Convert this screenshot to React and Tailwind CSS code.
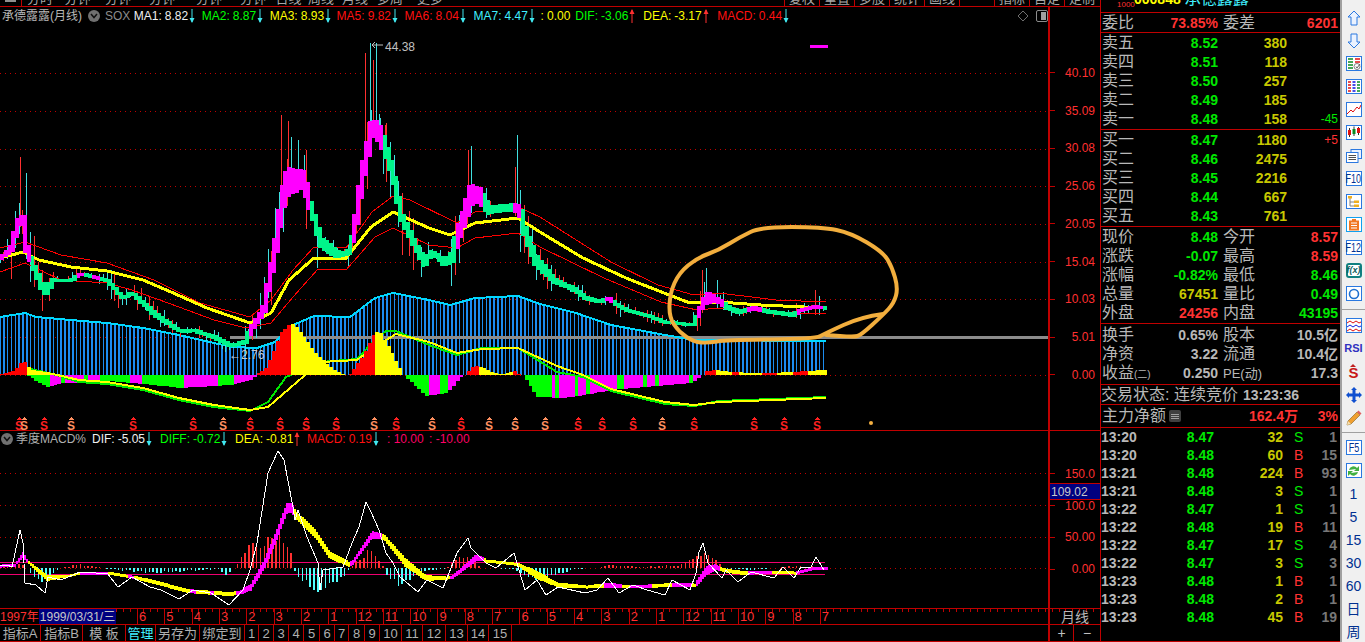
import React from 'react';

const LINE = 'border-[#c00000]';

// piecewise linear lookup, points sorted by x
const at = (pts, x) => {
  if (x <= pts[0][0]) return pts[0][1];
  for (let i = 1; i < pts.length; i++) {
    if (x <= pts[i][0]) {
      const [x0, y0] = pts[i - 1];
      const [x1, y1] = pts[i];
      return y0 + ((y1 - y0) * (x - x0)) / (x1 - x0);
    }
  }
  return pts[pts.length - 1][1];
};
const inRange = (ranges, x) => ranges.some(([a, b]) => x >= a && x < b);
const rnd = (i) => {
  const v = Math.sin(i * 12.9898) * 43758.5453;
  return v - Math.floor(v);
};
const line = (pts) => pts.map((p) => p.join(',')).join(' ');
const smooth = (pts) => {
  let d = `M${pts[0][0]} ${pts[0][1]}`;
  for (let i = 1; i < pts.length - 1; i++) {
    const mx = (pts[i][0] + pts[i + 1][0]) / 2;
    const my = (pts[i][1] + pts[i + 1][1]) / 2;
    d += ` Q${pts[i][0]} ${pts[i][1]} ${mx} ${my}`;
  }
  const last = pts[pts.length - 1];
  return `${d} L${last[0]} ${last[1]}`;
};

const STEP = 3.83;
const BARS = Array.from({ length: 216 }, (_, i) => i * STEP);

const volumeTop = [[0,317],[25,313],[36,317],[71,320],[107,323],[143,328],[179,335],[214,343],[232,347],[257,348],[275,342],[293,325],[314,316],[350,317],[375,298],[393,293],[429,300],[450,305],[475,298],[518,296],[540,304],[576,313],[611,325],[665,335],[694,340],[826,341]];
const price = [[0,258],[11,250],[16,232],[22,212],[27,250],[45,293],[54,280],[71,280],[82,274],[107,280],[123,298],[132,293],[154,313],[171,325],[182,332],[193,330],[214,337],[232,346],[246,342],[250,330],[264,310],[275,250],[282,200],[286,187],[289,180],[296,182],[302,178],[307,190],[311,207],[321,243],[339,255],[348,253],[354,233],[357,213],[362,177],[368,147],[371,130],[375,128],[380,134],[386,150],[393,173],[398,197],[400,213],[414,243],[425,263],[432,252],[445,263],[452,257],[457,237],[464,217],[471,195],[480,195],[489,210],[514,207],[520,210],[525,233],[536,260],[554,280],[576,290],[586,298],[601,302],[608,298],[615,303],[626,310],[647,315],[665,322],[694,325],[697,317],[701,307],[706,297],[719,300],[726,307],[740,312],[754,308],[772,312],[794,315],[801,310],[815,307],[826,308]];
// body height along the price path
const bodyHeight = [[0,3],[15,8],[25,8],[30,6],[45,8],[55,3],[130,3],[150,5],[180,3],[246,4],[270,10],[285,28],[303,18],[310,6],[325,12],[345,4],[360,15],[375,18],[385,12],[395,8],[420,8],[432,4],[445,8],[470,22],[490,8],[515,8],[530,12],[560,5],[600,3],[700,3],[706,14],[716,5],[826,3]];
const priceMagenta = [[0,27],[76,82],[90,96],[246,307],[350,382],[452,482],[512,520],[604,610],[696,722],[745,760],[796,822]];
const yellowMa = [[0,258],[23,252],[39,260],[71,267],[107,271],[143,280],[171,292],[207,308],[250,323],[271,313],[289,280],[314,258],[346,258],[371,227],[393,212],[429,228],[450,235],[475,223],[518,218],[540,232],[583,258],[626,278],[669,295],[690,303],[719,302],[761,305],[826,308]];
const redUpper = [[0,248],[25,242],[61,255],[107,263],[154,280],[200,303],[250,317],[271,300],[293,270],[314,247],[346,248],[372,212],[393,196],[410,200],[457,223],[475,212],[518,207],[540,217],[611,262],[658,285],[694,295],[719,293],[776,300],[826,302]];
const redLower = [[0,272],[25,263],[61,280],[107,283],[132,290],[179,307],[214,320],[246,328],[271,323],[293,297],[318,269],[346,270],[375,237],[393,228],[429,245],[457,248],[475,238],[518,233],[540,247],[604,278],[661,302],[697,310],[719,308],[769,312],[826,314]];
const spikes = [[20,157,'#ff3030'],[26,173,'#40e0e0'],[281,115,'#ff3030'],[288,121,'#ff3030'],[291,137,'#40e0e0'],[298,140,'#40e0e0'],[304,155,'#40e0e0'],[365,53,'#ff3030'],[370,43,'#40e0e0'],[373,60,'#ff3030'],[376,43,'#40e0e0'],[380,118,'#40e0e0'],[385,125,'#ff3030'],[468,150,'#ff3030'],[471,146,'#40e0e0'],[515,167,'#ff3030'],[517,135,'#40e0e0'],[702,270,'#ff3030'],[706,268,'#40e0e0'],[717,280,'#40e0e0'],[815,290,'#ff3030'],[819,296,'#40e0e0']];

const positive = [[0,374],[14,370],[21,360],[25,365],[29,370],[53,374],[56,375],[254,375],[265,368],[279,333],[289,323],[296,328],[314,353],[330,368],[343,375],[348,375],[362,355],[373,332],[379,333],[388,348],[402,375],[464,375],[473,365],[480,367],[490,372],[500,374],[514,371],[518,375],[701,375],[705,371],[716,370],[730,372],[750,373],[770,373],[790,372],[805,371],[826,370]];
const positiveYellow = [[24,56],[290,295],[297,345],[374,377],[379,402],[475,512],[716,730],[738,760],[775,790],[808,812],[815,827]];
const negative = [[25,375],[45,387],[52,385],[64,383],[107,381],[143,384],[179,388],[229,385],[250,380],[254,375],[402,375],[425,396],[446,393],[461,375],[521,375],[536,397],[560,398],[576,396],[611,390],[654,386],[690,383],[701,375]];
const negativeGreen = [[25,46],[59,64],[82,88],[96,127],[139,182],[218,230],[403,427],[439,446],[521,534],[536,551],[554,558],[574,577],[583,586],[614,622],[643,645],[654,657],[686,690]];
const macdYellow = [[26,370],[53,374],[79,380],[107,382],[143,388],[179,398],[214,405],[250,410],[268,407],[304,376],[321,362],[357,360],[375,347],[396,334],[429,342],[457,353],[482,349],[518,348],[557,366],[583,375],[611,389],[665,402],[694,405],[719,402],[826,398]];
const macdGreen = [[26,368],[53,374],[79,382],[107,384],[143,390],[179,400],[214,407],[250,411],[268,402],[286,377],[321,362],[357,359],[375,340],[386,331],[396,331],[429,345],[457,355],[482,348],[518,348],[557,372],[583,377],[611,391],[665,404],[694,406],[719,401],[826,397]];
const signals = [[19,'r'],[24,'o'],[44,'r'],[71,'o'],[133,'r'],[193,'r'],[223,'o'],[250,'r'],[280,'r'],[306,'r'],[336,'r'],[374,'o'],[396,'r'],[432,'o'],[461,'r'],[489,'o'],[515,'o'],[545,'o'],[578,'r'],[602,'r'],[633,'r'],[662,'o'],[694,'r'],[754,'r'],[784,'r'],[817,'r']];
const loop = [[883,314],[861,317],[826,333],[815,339],[726,340],[708,343],[694,342],[679,332],[669,317],[670,293],[679,273],[697,258],[719,250],[740,237],[761,227],[822,227],[851,233],[883,252],[892,267],[898,288],[894,303],[883,315],[861,335],[854,337],[826,335]];

const difLine = [[0,565],[7,565],[12,567],[20,530],[23,543],[25,583],[36,585],[45,593],[48,577],[61,580],[80,572],[96,573],[107,573],[118,587],[132,577],[150,587],[161,590],[179,599],[193,590],[211,593],[229,605],[243,590],[250,570],[257,543],[268,473],[278,451],[284,460],[293,507],[295,520],[298,510],[307,537],[318,563],[320,590],[323,570],[343,567],[352,543],[359,527],[366,502],[371,512],[379,530],[386,553],[393,563],[400,577],[418,592],[427,580],[443,588],[457,553],[468,538],[471,548],[486,563],[496,568],[514,553],[525,590],[537,580],[546,595],[558,587],[585,593],[597,590],[608,578],[619,593],[633,585],[647,590],[665,595],[672,580],[690,590],[696,573],[699,552],[703,543],[708,563],[722,578],[726,570],[738,582],[751,572],[774,578],[783,567],[794,578],[801,567],[811,567],[816,557],[824,570]];
// x, centre y, thickness
const signalBand = [[0,566,3],[14,565,3],[22,555,6],[27,562,3],[46,578,6],[68,576,2],[80,573,3],[107,573,3],[132,577,3],[154,582,4],[186,591,4],[229,594,4],[238,593,4],[250,587,7],[264,563,10],[275,537,11],[286,508,11],[291,508,10],[295,515,8],[314,533,9],[329,555,8],[348,564,5],[352,562,5],[371,535,8],[379,536,6],[384,538,6],[404,562,9],[425,578,6],[446,578,3],[452,577,4],[475,558,7],[482,559,4],[486,561,3],[514,564,3],[518,565,4],[536,575,8],[557,585,5],[586,587,3],[608,585,5],[629,587,3],[672,585,4],[694,585,3],[697,582,7],[706,570,9],[715,567,6],[722,570,4],[742,573,4],[772,572,3],[794,573,3],[815,568,3],[826,568,3]];
const bandMagenta = [[0,27],[80,107],[127,133],[189,195],[210,214],[236,293],[350,382],[450,484],[604,622],[629,651],[672,692],[696,720],[747,772],[796,827]];
const histogram = [[0,1],[10,2],[20,4],[26,1],[30,-6],[40,-14],[50,-8],[60,0],[68,1],[78,4],[90,2],[110,-1],[150,-5],[185,-3],[220,-1],[225,-8],[232,-2],[236,3],[250,22],[265,25],[275,34],[281,36],[291,15],[294,0],[297,-8],[310,-18],[320,-24],[335,-14],[345,-7],[352,2],[362,12],[370,18],[380,8],[384,0],[386,-8],[400,-17],[420,-6],[430,-2],[445,-1],[452,4],[461,14],[476,4],[482,0],[515,-1],[520,-6],[536,-11],[560,-6],[575,-1],[600,0],[608,3],[640,1],[680,3],[696,12],[706,16],[718,6],[725,-1],[755,-2],[775,0],[790,2],[826,1]];

const signalFill = (k) => (k === 'r' ? '#ff2020' : '#ff9060');

function MainChart() {
  return (
    <svg className="block w-[1048px] flex-1" viewBox="0 25 1048 405" shapeRendering="crispEdges">
      {[73, 111, 149, 186, 224, 262, 299, 337, 375].map((y) => (
        <line key={y} x1="0" x2="1048" y1={y} y2={y} stroke="#c00000" strokeDasharray="1 4" />
      ))}
      {BARS.map((x) => (
        <line key={x} x1={x} x2={x} y1={at(volumeTop, x)} y2="375" stroke="#1c8cf0" strokeWidth="1.6" />
      ))}
      <rect x="230" y="336" width="818" height="3" fill="#8c8c8c" />
      <polyline points={line(volumeTop)} fill="none" stroke="#00d8ff" strokeWidth="2" />
      {BARS.map((x, i) => {
        const slope = Math.abs(at(price, x + 4) - at(price, x - 4));
        const amp = 3 + Math.min(slope * 1.6, 38);
        const y = at(price, x);
        const color = rnd(i) > 0.5 ? '#ff3030' : '#40e0e0';
        return <line key={x} x1={x} x2={x} y1={y - amp * rnd(i + 300)} y2={y + amp * rnd(i + 600)} stroke={color} />;
      })}
      {spikes.map(([x, top, color]) => (
        <line key={x} x1={x} x2={x} y1={top} y2={at(price, x) + 8} stroke={color} />
      ))}
      <polyline points={line(redUpper)} fill="none" stroke="#ff0000" />
      <polyline points={line(redLower)} fill="none" stroke="#ff0000" />
      <polyline points={line(yellowMa)} fill="none" stroke="#ffff00" strokeWidth="3" />
      {BARS.map((x) => {
        const a = at(price, x);
        const b = at(price, x + STEP);
        const extra = at(bodyHeight, x) / 2;
        return (
          <rect key={x} x={x} width={STEP} y={Math.min(a, b) - extra} height={Math.abs(a - b) + extra * 2} fill={inRange(priceMagenta, x) ? '#ff00ff' : '#00f58a'} />
        );
      })}
      {BARS.map((x) => {
        const y = at(negative, x);
        if (y <= 375 || x > 702) return null;
        return <rect key={x} x={x} width={STEP} y="375" height={y - 375} fill={inRange(negativeGreen, x) ? '#00ff00' : '#ff00ff'} />;
      })}
      <polyline points={line(macdGreen)} fill="none" stroke="#00e800" strokeWidth="2" />
      <polyline points={line(macdYellow)} fill="none" stroke="#ffff00" strokeWidth="2" />
      {BARS.map((x) => {
        const y = at(positive, x);
        if (y >= 375) return null;
        return <rect key={x} x={x} width={STEP} y={y} height={375 - y} fill={inRange(positiveYellow, x) ? '#ffff00' : '#ff0000'} />;
      })}
      {signals.map(([x, k]) => (
        <g key={x}>
          <polygon points={`${x},417 ${x - 3},420 ${x + 3},420`} fill={signalFill(k)} />
          <text x={x} y="429.5" textAnchor="middle" fontSize="12" fontWeight="700" fill={signalFill(k)} shapeRendering="auto">S</text>
        </g>
      ))}
      <rect x="810" y="45" width="18" height="3" fill="#ff00ff" />
      <circle cx="871" cy="423" r="2" fill="#f5b041" shapeRendering="auto" />
      <g shapeRendering="auto">
        <text x="385" y="51" fontSize="12" fill="#c0c0c0">44.38</text>
        <path d="M383 45 L372 45 L375 42 M372 45 L375 48" fill="none" stroke="#c0c0c0" />
        <text x="229" y="359" fontSize="12" fill="#c8c8c8">←2.76</text>
        <path d={smooth(loop)} fill="none" stroke="#f2ae3d" strokeWidth="4" strokeLinecap="round" strokeLinejoin="round" />
      </g>
    </svg>
  );
}

function SubChart() {
  return (
    <svg className="block w-[1048px] flex-1" viewBox="0 447 1048 161" shapeRendering="crispEdges">
      {[473, 505, 537, 568].map((y) => (
        <line key={y} x1="0" x2="1048" y1={y} y2={y} stroke="#c00000" strokeDasharray="1 4" />
      ))}
      <line x1="0" x2="825" y1="562" y2="562" stroke="#f00070" />
      <line x1="0" x2="825" y1="574" y2="574" stroke="#f00070" />
      {BARS.map((x, i) => {
        const v = at(histogram, x) * (0.75 + rnd(i + 90) * 0.4);
        if (Math.abs(v) < 0.5) return null;
        return <line key={x} x1={x} x2={x} y1="568" y2={568 - v} stroke={v > 0 ? '#ff3030' : '#50ffff'} strokeWidth="1.5" />;
      })}
      {Array.from({ length: 414 }, (_, i) => i * 2).map((x) => {
        const pts = signalBand.map((p) => [p[0], p[1]]);
        const th = at(signalBand.map((p) => [p[0], p[2]]), x);
        return <rect key={x} x={x} width="2" y={at(pts, x) - th / 2} height={th} fill={inRange(bandMagenta, x) ? '#ff00ff' : '#ffff00'} />;
      })}
      <polyline points={line(difLine)} fill="none" stroke="#ffffff" />
    </svg>
  );
}

function Arrow({ up, color }) {
  return (
    <svg className="mx-[1px] shrink-0" width="6" height="14" viewBox="0 0 6 14">
      {up ? (
        <>
          <line x1="3" x2="3" y1="1" y2="14" stroke={color} />
          <polygon points="3,0 0.5,5 5.5,5" fill={color} />
        </>
      ) : (
        <>
          <line x1="3" x2="3" y1="0" y2="13" stroke={color} />
          <polygon points="3,14 0.5,9 5.5,9" fill={color} />
        </>
      )}
    </svg>
  );
}

const CYAN = '#40e8f0';
const RED_UP = '#ff3030';

function Chevron() {
  return (
    <span className="flex h-[12px] w-[12px] items-center justify-center rounded-full bg-[#707070]">
      <svg width="8" height="6" viewBox="0 0 8 6">
        <path d="M1 1 L4 4.5 L7 1" fill="none" stroke="#101010" strokeWidth="1.5" />
      </svg>
    </span>
  );
}

function Legend({ width, className, name, value, arrow }) {
  return (
    <div className={`flex items-center whitespace-nowrap ${width} ${className}`}>
      <span>{name}</span>
      <span className="ml-[3px]">{value}</span>
      {arrow === 'down' && <Arrow color={CYAN} />}
      {arrow === 'up' && <Arrow up color={RED_UP} />}
    </div>
  );
}

function MainLegend() {
  return (
    <div className="flex h-[18px] shrink-0 items-center text-[12px] leading-none">
      <span className="ml-[2px] w-[86px] whitespace-nowrap text-[#b8b8b8]">承德露露(月线)</span>
      <Chevron />
      <span className="ml-[5px] w-[29px] text-[#8c8c8c]">SOX</span>
      <Legend width="w-[68px]" className="text-[#f0f0f0]" name="MA1:" value="8.82" arrow="down" />
      <Legend width="w-[68px]" className="text-[#00ff00]" name="MA2:" value="8.87" arrow="down" />
      <Legend width="w-[67px]" className="text-[#ffff00]" name="MA3:" value="8.93" arrow="down" />
      <Legend width="w-[68px]" className="text-[#ff1010]" name="MA5:" value="9.82" arrow="down" />
      <Legend width="w-[69px]" className="text-[#ff1010]" name="MA6:" value="8.04" arrow="down" />
      <Legend width="w-[67px]" className="text-[#40f0ff]" name="MA7:" value="4.47" arrow="down" />
      <span className="w-[35px] text-[#ffff00]">: 0.00</span>
      <Legend width="w-[68px]" className="text-[#00ff00]" name="DIF:" value="-3.06" arrow="up" />
      <Legend width="w-[74px]" className="text-[#ffff00]" name="DEA:" value="-3.17" arrow="up" />
      <Legend width="w-[80px]" className="text-[#ff1010]" name="MACD:" value="0.44" arrow="down" />
      <svg className="ml-[220px]" width="12" height="12" viewBox="0 0 12 12">
        <polygon points="6,1 11,6 6,11 1,6" fill="none" stroke="#707070" />
      </svg>
      <span className="ml-[7px] flex h-[12px] w-[12px] rounded-[2px] border border-[#8c8c8c] p-[1px]">
        <span className="ml-auto h-full w-[5px] bg-[#a0a0a0]" />
      </span>
    </div>
  );
}

function SubLegend() {
  return (
    <div className="flex h-[16px] shrink-0 items-center text-[12px] leading-none">
      <span className="ml-[1px]"><Chevron /></span>
      <span className="ml-[3px] w-[76px] whitespace-nowrap text-[#b0b0b0]">季度MACD%</span>
      <Legend width="w-[68px]" className="text-[#f0f0f0]" name="DIF:" value="-5.05" arrow="down" />
      <Legend width="w-[75px]" className="text-[#00ff00]" name="DIFF:" value="-0.72" arrow="down" />
      <Legend width="w-[72px]" className="text-[#ffff00]" name="DEA:" value="-0.81" arrow="up" />
      <Legend width="w-[80px]" className="text-[#ff1010]" name="MACD:" value="0.19" arrow="down" />
      <span className="w-[42px] text-[#ff0066]">: 10.00</span>
      <span className="text-[#ff0066]">: -10.00</span>
    </div>
  );
}

function AxisRow({ label, height }) {
  return (
    <div className={`flex items-center ${height}`}>
      <span className="h-px w-[5px] bg-[#c00000]" />
      <span className="ml-auto pr-[5px] text-[12px] leading-none text-[#ff3030]">{label}</span>
    </div>
  );
}

const TOP_TABS = [
  ['分时', 'w-[36px]'], ['分钟', 'w-[39px]'], ['分钟', 'w-[42px]'], ['分钟', 'w-[46px]'], ['分钟', 'w-[48px]'], ['分钟', 'w-[40px]'], ['日线', 'w-[31px]'], ['周线', 'w-[34px]'], ['月线', 'w-[34px] text-[#40f0ff]'], ['多周', 'w-[36px]'], ['更多', 'w-[44px]'],
];
const RIGHT_TABS = ['复权', '重置', '多股', '统计', '画线', '', '指标', '自定', '定制'];

function TopStrip() {
  return (
    <div className={`flex h-[7px] shrink-0 overflow-hidden border-b ${LINE}`}>
      <div className="flex h-[6px] w-[22px] shrink-0 border-r border-[#c00000]">
        <span className="ml-[5px] h-[2px] w-[11px] bg-[#909090]" />
      </div>
      {TOP_TABS.map(([label, cls], i) => (
        <span key={i} className={`flex h-[5px] shrink-0 items-end justify-center text-[13px] leading-none text-[#a8a8a8] ${cls}`}>
          {label}
        </span>
      ))}
      <div className="ml-[332px] flex">
        {RIGHT_TABS.map((label, i) => (
          <span key={i} className="flex h-[6px] w-[35px] shrink-0 items-end justify-center border-l border-[#c00000] pb-[1px] text-[13px] leading-none text-[#a8a8a8]">
            {label}
          </span>
        ))}
      </div>
    </div>
  );
}

const MONTHS = [6, 5, 4, 3, 2, 3, 2, 1, 12, 11, 10, 9, 8, 7, 6, 5, 4, 3, 2, 1, 12, 11, 10, 9, 8, 7];

function TimeAxis() {
  return (
    <div className={`flex h-[16px] shrink-0 border-b ${LINE} bg-[repeating-linear-gradient(90deg,#c00000_0_1px,transparent_1px_6.83px)] bg-[length:100%_3px] bg-no-repeat`}>
      <div className="flex w-[1048px] items-stretch text-[13px] leading-none text-[#ff3030]">
        <span className="flex w-[39px] shrink-0 items-center whitespace-nowrap bg-black text-[12px]">1997年</span>
        <span className="flex w-[77px] shrink-0 items-center justify-center whitespace-nowrap border border-[#000080] bg-[#000080] text-[12px] text-[#c8c8c8]">1999/03/31/三</span>
        <span className="w-[21px] shrink-0" />
        {MONTHS.map((m, i) => (
          <span key={i} className="flex w-[27.32px] shrink-0 items-center border-l border-[#c00000] pl-[1px] text-[#ff3030]">{m}</span>
        ))}
      </div>
      <span className={`flex flex-1 items-center justify-center border-l-2 ${LINE} text-[14px] leading-none text-[#b8b8b8]`}>月线</span>
    </div>
  );
}

const TOOL_TABS = [
  ['指标A', 'w-[41px]'], ['指标B', 'w-[42px]'], ['模 板', 'w-[43px]'], ['管理', 'w-[30px] text-[#40f0ff]'], ['另存为', 'w-[44px]'], ['绑定到', 'w-[45px]'],
  ['1', 'w-[14px]'], ['2', 'w-[15px]'], ['3', 'w-[15px]'], ['4', 'w-[15px]'], ['5', 'w-[16px]'], ['6', 'w-[15px]'], ['7', 'w-[14px]'], ['8', 'w-[16px]'], ['9', 'w-[15px]'], ['10', 'w-[22px]'], ['11', 'w-[21px]'], ['12', 'w-[23px]'], ['13', 'w-[22px]'], ['14', 'w-[21px]'], ['15', 'w-[23px]'],
];

function BottomBar() {
  return (
    <div className={`flex h-[17px] shrink-0 border-b ${LINE}`}>
      <div className="flex w-[1048px] text-[13px] leading-none text-[#b0b0b0]">
        {TOOL_TABS.map(([label, cls]) => (
          <span key={label} className={`flex shrink-0 items-center justify-center whitespace-nowrap border-r border-[#c00000] ${cls}`}>{label}</span>
        ))}
      </div>
      <div className={`flex flex-1 border-l-2 ${LINE} text-[14px] leading-none text-[#c0c0c0]`}>
        <span className="flex w-[24px] items-center justify-center border-r border-[#c00000]">+</span>
        <span className="flex flex-1 items-center justify-center">−</span>
      </div>
    </div>
  );
}

function ChartColumn() {
  return (
    <div className="flex w-[1100px] shrink-0 flex-col">
      <TopStrip />
      <div className={`flex h-[424px] shrink-0 border-b ${LINE}`}>
        <div className="flex w-[1048px] flex-col"><MainLegend /><MainChart /></div>
        <div className={`flex-1 border-l-2 ${LINE} pt-[47px]`}>
          {['40.10', '35.09', '30.08', '25.06', '20.05', '15.04', '10.03', '5.01', '0.00'].map((l) => (
            <AxisRow key={l} label={l} height="h-[37.75px]" />
          ))}
        </div>
      </div>
      <div className={`flex h-[178px] shrink-0 border-b ${LINE}`}>
        <div className="flex w-[1048px] flex-col"><SubLegend /><SubChart /></div>
        <div className={`relative flex-1 border-l-2 ${LINE} pt-[27px]`}>
          {['150.0', '100.0', '50.00', '0.00'].map((l) => (
            <AxisRow key={l} label={l} height="h-[31.8px]" />
          ))}
          <span className={`absolute left-0 top-[52px] flex h-[17px] w-full items-center border-y ${LINE} bg-[#000080] pl-[1px] text-[12px] leading-none text-[#c8c8c8]`}>109.02</span>
        </div>
      </div>
      <TimeAxis />
      <BottomBar />
    </div>
  );
}

const GREEN = 'text-[#00e800]';
const RED = 'text-[#ff3232]';
const OLIVE = 'text-[#c8c800]';
const GREY = 'text-[#b8b8b8]';

const SELL = [['卖五','8.52','380'],['卖四','8.51','118'],['卖三','8.50','257'],['卖二','8.49','185'],['卖一','8.48','158','-45',GREEN]];
const BUY = [['买一','8.47','1180','+5',RED],['买二','8.46','2475'],['买三','8.45','2216'],['买四','8.44','667'],['买五','8.43','761']];
const STATS = [
  ['现价','8.48',GREEN,'今开','8.57',RED],
  ['涨跌','-0.07',GREEN,'最高','8.59',RED],
  ['涨幅','-0.82%',GREEN,'最低','8.46',GREEN],
  ['总量','67451',OLIVE,'量比','0.49',GREEN],
  ['外盘','24256',RED,'内盘','43195',GREEN],
];
const FUNDS = [
  ['换手','0.65%','股本','10.5亿'],
  ['净资','3.22','流通','10.4亿'],
  [<>收益<span className="text-[10px]">(二)</span></>,'0.250',<span className="text-[13px]">PE(动)</span>,'17.3'],
];
const TICKS = [
  ['13:20','8.47','32','S','1'],['13:20','8.48','60','B','15'],['13:21','8.48','224','B','93'],['13:21','8.48','3','S','1'],['13:22','8.47','1','S','1'],['13:22','8.48','19','B','11'],['13:22','8.47','17','S','4'],['13:22','8.47','3','S','3'],['13:23','8.48','1','B','1'],['13:23','8.48','2','B','1'],['13:23','8.48','45','B','19'],
];

function Label({ children }) {
  return <span className="whitespace-nowrap text-[16px] leading-none text-[#b8b8b8]">{children}</span>;
}

function Num({ children, className = '' }) {
  return <span className={`whitespace-nowrap text-right text-[14px] font-bold leading-none ${className}`}>{children}</span>;
}

function Depth({ rows }) {
  return (
    <div className={`h-[97px] shrink-0 border-b ${LINE}`}>
      {rows.map(([label, p, v, delta, color]) => (
        <div key={label} className="grid h-[19px] grid-cols-[116px_69px_51px] items-center pl-[1px]">
          <div className="flex items-center justify-between">
            <Label>{label}</Label>
            <Num className={GREEN}>{p}</Num>
          </div>
          <Num className={OLIVE}>{v}</Num>
          {delta ? <span className={`text-right text-[12px] leading-none ${color}`}>{delta}</span> : <span />}
        </div>
      ))}
    </div>
  );
}

function Half({ label, value, color, className }) {
  return (
    <div className={`flex items-center justify-between ${className}`}>
      <Label>{label}</Label>
      <Num className={color}>{value}</Num>
    </div>
  );
}

function QuotePanel() {
  return (
    <div className={`flex w-[240px] shrink-0 flex-col border-l ${LINE}`}>
      <div className={`flex h-[13px] shrink-0 items-end overflow-hidden border-b ${LINE} pl-[16px] leading-none`}>
        <span className="w-[17px] shrink-0 -translate-y-[3px] text-[8px] text-[#ff3030]">1000</span>
        <span className="mr-[4px] -translate-y-[6px] text-[14px] font-bold text-[#ffff00]">000848</span>
        <span className="-translate-y-[5px] text-[16px] text-[#40f0ff]">承德露露</span>
      </div>
      <div className={`flex h-[20px] shrink-0 items-center border-b ${LINE} pl-[1px]`}>
        <Half label="委比" value="73.85%" color={RED} className="w-[116px]" />
        <Half label="委差" value="6201" color={RED} className="ml-[5px] w-[115px]" />
      </div>
      <Depth rows={SELL} />
      <Depth rows={BUY} />
      <div className={`h-[97px] shrink-0 border-b ${LINE}`}>
        {STATS.map(([a, b, c, d, e, f]) => (
          <div key={a} className="flex h-[19px] items-center pl-[1px]">
            <Half label={a} value={b} color={c} className="w-[116px]" />
            <Half label={d} value={e} color={f} className="ml-[5px] w-[115px]" />
          </div>
        ))}
      </div>
      <div className={`h-[61px] shrink-0 border-b ${LINE} pt-[1px]`}>
        {FUNDS.map(([a, b, c, d]) => (
          <div key={b} className="flex h-[19px] items-center pl-[1px]">
            <Half label={a} value={b} color={GREY} className="w-[116px]" />
            <Half label={c} value={d} color={GREY} className="ml-[5px] w-[115px]" />
          </div>
        ))}
      </div>
      <div className={`flex h-[20px] shrink-0 items-center border-b ${LINE}`}>
        <Label>交易状态: 连续竞价</Label>
        <Num className={`ml-[5px] ${GREY}`}>13:23:36</Num>
      </div>
      <div className={`flex h-[23px] shrink-0 items-center border-b ${LINE} pl-[1px]`}>
        <Label>主力净额</Label>
        <span className="ml-[3px] flex h-[12px] w-[12px] flex-col justify-center gap-[1px] rounded-[2px] bg-[#404040] px-[2px]">
          <span className="h-px bg-[#a0a0a0]" />
          <span className="h-px bg-[#a0a0a0]" />
          <span className="h-px bg-[#a0a0a0]" />
        </span>
        <Num className={`ml-[68px] ${RED}`}>162.4万</Num>
        <Num className={`ml-auto pr-[2px] ${RED}`}>3%</Num>
      </div>
      <div className={`flex-1 border-b ${LINE}`}>
        {TICKS.map(([t, p, v, side, n], i) => (
          <div key={i} className="grid h-[18px] grid-cols-[113px_69px_36px_18px] items-center">
            <div className="flex items-center justify-between">
              <Num className={GREY}>{t}</Num>
              <Num className={GREEN}>{p}</Num>
            </div>
            <Num className={OLIVE}>{v}</Num>
            <span className={`pl-[11px] text-[14px] leading-none ${side === 'S' ? GREEN : RED}`}>{side}</span>
            <Num className="text-[#787878]">{n}</Num>
          </div>
        ))}
      </div>
    </div>
  );
}

function Box({ children, className = 'border-[#2a78e0]' }) {
  return <span className={`flex h-[15px] w-[16px] items-center justify-center border bg-white ${className}`}>{children}</span>;
}

function BoxText({ children }) {
  return <span className="inline-block scale-x-[0.75] text-[12px] leading-none text-[#003090]">{children}</span>;
}

const SvgIcon = ({ children }) => <svg width="16" height="16" viewBox="0 0 16 16">{children}</svg>;

const TOOLS = [
  <SvgIcon><path d="M8 1 L14 7 H11 V15 H5 V7 H2 Z" fill="#eaf2ff" stroke="#2a78e0" /></SvgIcon>,
  <SvgIcon><path d="M8 15 L14 9 H11 V1 H5 V9 H2 Z" fill="#eaf2ff" stroke="#2a78e0" /></SvgIcon>,
  <Box><svg width="14" height="13" viewBox="0 0 14 13"><path d="M1 2H6M1 5H6M1 8H6M1 11H6" stroke="#0a8a20" strokeWidth="1.4" /><path d="M8 2H13M8 5H13" stroke="#e01010" strokeWidth="1.4" /><circle cx="10" cy="9.5" r="3" fill="none" stroke="#808080" /><path d="M9 9.5 L10 11 L13 7" fill="none" stroke="#606060" /></svg></Box>,
  <Box><svg width="14" height="13" viewBox="0 0 14 13"><path d="M1 2H4M1 5H4M1 8H4M1 11H4" stroke="#e01010" strokeWidth="1.4" /><path d="M5.5 2H8.5M5.5 5H8.5M5.5 8H8.5M5.5 11H8.5" stroke="#1010e0" strokeWidth="1.4" /><path d="M10 2H13M10 5H13M10 8H13M10 11H13" stroke="#0a8a20" strokeWidth="1.4" /></svg></Box>,
  <Box><svg width="14" height="13" viewBox="0 0 14 13"><path d="M0 11 L4 7 L6 9 L10 4 L12 6 L14 2" fill="none" stroke="#e01010" /></svg></Box>,
  <Box><svg width="14" height="13" viewBox="0 0 14 13"><path d="M2.5 2V11M7 0.5V10M11.5 1V9" stroke="#303030" /><rect x="1" y="4" width="3" height="5" fill="#e01010" /><rect x="5.5" y="3" width="3" height="5" fill="#0a8a20" /><rect x="10" y="2" width="3" height="5" fill="#e01010" /></svg></Box>,
  <SvgIcon><rect x="5" y="1.5" width="10.5" height="9" fill="#eaf2ff" stroke="#2a78e0" /><rect x="0.5" y="4.5" width="11.5" height="10" fill="#fff" stroke="#2a78e0" /><path d="M2.5 7.5H10M2.5 9.5H10M2.5 11.5H10" stroke="#505050" strokeWidth="1.2" /></SvgIcon>,
  <Box><BoxText>F10</BoxText></Box>,
  <Box><svg width="14" height="13" viewBox="0 0 14 13"><path d="M3 3V11H8M3 7H8" fill="none" stroke="#808080" /><rect x="1" y="1" width="4" height="2.5" fill="#f0b020" /><rect x="7" y="5.5" width="5" height="2.5" fill="#f0b020" /><rect x="7" y="9.5" width="5" height="2.5" fill="#f0b020" /></svg></Box>,
  <Box className="border-[#10a0f0]"><svg width="12" height="13" viewBox="0 0 12 13"><path d="M4 1H8V2.5H11V12.5H1V2.5H4Z" fill="#f07820" /><path d="M3 5H9M3 7.5H9M3 10H9" stroke="#fff" /></svg></Box>,
  <Box><BoxText>F12</BoxText></Box>,
  <Box className="rounded-[3px] border-2 border-[#108080]"><span className="text-[9px] font-bold italic leading-none text-[#106060]">f(x)</span></Box>,
  <Box><svg width="12" height="12" viewBox="0 0 12 12"><circle cx="6" cy="6" r="4.5" fill="none" stroke="#2070d0" strokeWidth="1.6" /></svg></Box>,
  <Box><svg width="14" height="12" viewBox="0 0 14 12"><path d="M0 3 L3 1 L6 3 L9 1 L12 3 L14 2" fill="none" stroke="#e01010" /><path d="M0 7 L3 5 L6 7 L9 5 L12 7 L14 6" fill="none" stroke="#1020e0" /><path d="M0 11 L3 9 L6 11 L9 9 L12 11 L14 10" fill="none" stroke="#e01010" /></svg></Box>,
  <span className="text-[11px] font-bold leading-none text-[#3030c0]">RSI</span>,
  <span className="flex flex-col items-center leading-none"><span className="h-0 w-0 border-x-[3px] border-b-[3px] border-x-transparent border-b-[#c02020]" /><span className="text-[15px] font-bold leading-[12px] text-[#c81818]">S</span></span>,
  <SvgIcon><path d="M8 0 L11 3 H9.5 V6.5 H13 V5 L16 8 L13 11 V9.5 H9.5 V13 H11 L8 16 L5 13 H6.5 V9.5 H3 V11 L0 8 L3 5 V6.5 H6.5 V3 H5 Z" fill="#1050d0" /></SvgIcon>,
  <SvgIcon><path d="M1 15 L2 11 L11 2 L14 5 L5 14 Z" fill="#f0a030" stroke="#806020" strokeWidth="0.6" /><path d="M11 2 L12.5 0.5 L15.5 3.5 L14 5 Z" fill="#e06060" /><path d="M1 15 L2 11 L5 14 Z" fill="#f5dfb0" /></SvgIcon>,
  <Box><BoxText>F5</BoxText></Box>,
  <Box className="border-[#2a78e0]"><svg width="13" height="12" viewBox="0 0 13 12"><path d="M2 5 A4.5 4.5 0 0 1 10 3 L12 1 V6 H7 L9 4" fill="#40b040" /><path d="M11 7 A4.5 4.5 0 0 1 3 9 L1 11 V6 H6 L4 8" fill="#40b040" /></svg></Box>,
];
const PERIODS = ['1', '5', '15', '30', '60', '日', '周'];

function ToolRow({ children }) {
  return <div className="flex h-[23px] shrink-0 items-center justify-center">{children}</div>;
}

function Toolbar() {
  return (
    <div className="flex w-[25px] shrink-0 flex-col overflow-hidden border-l-2 border-[#a0a0a0] bg-[#f0f0f0] pt-[6px]">
      {TOOLS.slice(0, 13).map((icon, i) => <ToolRow key={i}>{icon}</ToolRow>)}
      <div className="flex h-[9px] shrink-0 items-center"><span className="h-px w-full bg-[#a0a0a0]" /></div>
      {TOOLS.slice(13, 18).map((icon, i) => <ToolRow key={i}>{icon}</ToolRow>)}
      <div className="flex h-[7px] shrink-0 items-center"><span className="h-px w-full bg-[#a0a0a0]" /></div>
      {TOOLS.slice(18).map((icon, i) => <ToolRow key={i}>{icon}</ToolRow>)}
      {PERIODS.map((p) => (
        <ToolRow key={p}><span className="text-[14px] leading-none text-[#003090]">{p}</span></ToolRow>
      ))}
    </div>
  );
}

export default function App() {
  return (
    <div className="flex h-[642px] w-[1365px] overflow-hidden bg-black font-['Liberation_Sans','Noto_Sans_CJK_SC',sans-serif]">
      <ChartColumn />
      <QuotePanel />
      <Toolbar />
    </div>
  );
}
